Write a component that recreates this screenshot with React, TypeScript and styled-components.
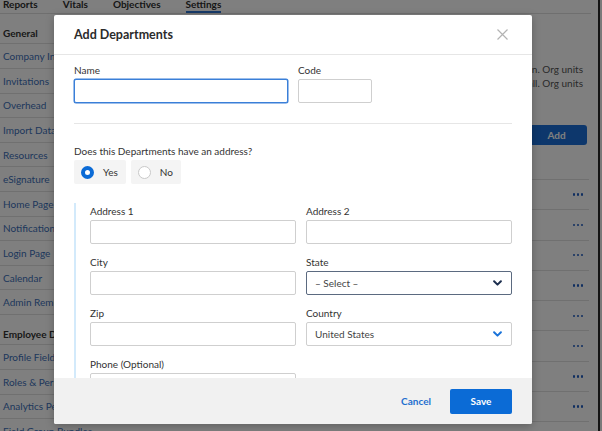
import styled, { createGlobalStyle } from "styled-components";

const GlobalStyle = createGlobalStyle`
  html, body {
    margin: 0;
    padding: 0;
  }
  body {
    font-family: Lato, "Open Sans", sans-serif;
    background: #7a7a7a;
  }
  * {
    box-sizing: border-box;
  }
`;

const Frame = styled.div`
  position: relative;
  width: 602px;
  height: 431px;
  overflow: hidden;
  background: #7a7a7a;
`;

const Page = styled.div`
  position: relative;
  width: 600px;
  height: 431px;
  background: #fff;
  border-right: 2px solid #141414;
  overflow: hidden;
`;

/* ---------- page behind the dialog ---------- */

const TabBar = styled.nav`
  display: flex;
  gap: 25px;
  height: 14px;
  padding-left: 3px;
  margin-right: 7px;
  border-bottom: 1px solid #dedede;
`;

const Tab = styled.span<{ $active?: boolean }>`
  margin-top: -1px;
  height: 14px;
  font-size: 10px;
  font-weight: 700;
  line-height: 10px;
  color: #2e2e2e;
  border-bottom: 2px solid ${(p) => (p.$active ? "#2f76d2" : "transparent")};
`;

const Layout = styled.div`
  display: grid;
  grid-template-columns: 150px 1fr;
`;

const Sidebar = styled.aside`
  display: flex;
  flex-direction: column;
`;

const SideTitle = styled.div`
  height: 30.4px;
  padding: 12px 0 0 3px;
  font-size: 10px;
  font-weight: 700;
  line-height: 14px;
  color: #333;
  white-space: nowrap;
  border-bottom: 1px solid #e0e0e0;
`;

const SideItem = styled.div`
  display: flex;
  align-items: center;
  height: 24.6px;
  padding-left: 3px;
  font-size: 10px;
  color: #3c6fb8;
  white-space: nowrap;
  border-bottom: 1px solid #e0e0e0;
`;

const Main = styled.main`
  display: flex;
  flex-direction: column;
  padding: 48px 9px 0 20px;
`;

const DescLine = styled.div`
  font-size: 10px;
  line-height: 14px;
  color: #555;
  text-align: right;
  white-space: nowrap;
  padding-right: 6px;
`;

const Toolbar = styled.div`
  display: flex;
  justify-content: flex-end;
  margin-top: 35px;
`;

const AddButton = styled.button`
  width: 61px;
  height: 20px;
  margin-right: 2px;
  border: none;
  border-radius: 3px;
  background: #1b6fd8;
  color: #fff;
  font-family: inherit;
  font-size: 10px;
  font-weight: 700;
`;

const Table = styled.div`
  margin-top: 5px;
  display: flex;
  flex-direction: column;
`;

const TableRow = styled.div<{ $head?: boolean }>`
  display: flex;
  align-items: center;
  justify-content: flex-end;
  height: ${(p) => (p.$head ? "30px" : "30.3px")};
  padding-right: 6px;
  border-bottom: 1px solid #e0e0e0;
`;

const Dots = styled.span`
  display: flex;
  gap: 1.5px;
  & > i {
    width: 2.5px;
    height: 2.5px;
    border-radius: 50%;
    background: #1f5cc0;
  }
`;

/* ---------- dialog ---------- */

const Overlay = styled.div`
  position: absolute;
  inset: 0;
  padding: 15px 0 0 54px;
  background: rgba(0, 0, 0, 0.5);
`;

const Modal = styled.div`
  display: flex;
  flex-direction: column;
  width: 478px;
  height: 409px;
  background: #fff;
  border-radius: 2px;
  overflow: hidden;
  box-shadow: 0 2px 8px rgba(0, 0, 0, 0.25);
`;

const ModalHeader = styled.div`
  display: flex;
  align-items: center;
  justify-content: space-between;
  height: 40px;
  flex: none;
  padding: 0 20px;
  border-bottom: 1px solid #e6e6e6;
`;

const ModalTitle = styled.h2`
  margin: 0;
  font-size: 12.5px;
  font-weight: 700;
  color: #2b2b2b;
`;

const CloseButton = styled.button`
  display: flex;
  padding: 0;
  margin-right: 4px;
  border: none;
  background: none;
  color: #b3b3b3;
`;

const ModalBody = styled.div`
  flex: 1;
  overflow: hidden;
  padding: 7px 20px 0;
`;

const Row = styled.div`
  display: flex;
  gap: 10px;
`;

const Field = styled.div<{ $width?: number }>`
  display: flex;
  flex-direction: column;
  width: ${(p) => (p.$width ? `${p.$width}px` : "auto")};
`;

const Label = styled.label`
  margin-bottom: 1px;
  font-size: 10px;
  line-height: 16px;
  color: #333;
`;

const Input = styled.div<{ $focus?: boolean }>`
  height: 24px;
  border: 1px solid ${(p) => (p.$focus ? "#3a7fd8" : "#cfcfcf")};
  border-radius: 2px;
  background: #fff;
  box-shadow: ${(p) => (p.$focus ? "0 0 0 0.5px #3a7fd8" : "none")};
`;

const Select = styled.div<{ $active?: boolean }>`
  display: flex;
  align-items: center;
  justify-content: space-between;
  height: 24px;
  padding: 0 9px 0 8px;
  border: 1px solid ${(p) => (p.$active ? "#5b6a80" : "#cfcfcf")};
  border-radius: 2px;
  font-size: 10px;
  color: #444;
`;

const Divider = styled.hr`
  margin: 20px 0 0;
  border: none;
  border-top: 1px solid #e6e6e6;
`;

const Question = styled.div`
  margin: 19px 0 1px;
  font-size: 10px;
  line-height: 16px;
  color: #333;
`;

const RadioGroup = styled.div`
  display: flex;
  gap: 5px;
`;

const RadioOption = styled.div`
  display: flex;
  align-items: center;
  gap: 9px;
  height: 24px;
  padding: 0 8px 0 7px;
  background: #f4f4f4;
  border-radius: 2px;
  font-size: 10px;
  color: #333;
`;

const RadioDot = styled.span<{ $checked?: boolean }>`
  width: 13px;
  height: 13px;
  border-radius: 50%;
  background: #fff;
  border: ${(p) => (p.$checked ? "4px solid #0b6bd6" : "1px solid #c9c9c9")};
`;

const AddressSection = styled.div`
  display: grid;
  grid-template-columns: 1fr 1fr;
  column-gap: 10px;
  row-gap: 10px;
  margin-top: 19px;
  padding: 0 0 10px 14px;
  border-left: 2px solid #d3eafb;
`;

const ModalFooter = styled.div`
  display: flex;
  align-items: center;
  justify-content: flex-end;
  gap: 19px;
  height: 46px;
  flex: none;
  padding: 0 20px;
  background: #f1f1f1;
`;

const CancelButton = styled.button`
  padding: 0;
  border: none;
  background: none;
  font-family: inherit;
  font-size: 10px;
  font-weight: 700;
  color: #1f6fcf;
`;

const SaveButton = styled.button`
  width: 62px;
  height: 25px;
  border: none;
  border-radius: 2px;
  background: #0b6bd6;
  color: #fff;
  font-family: inherit;
  font-size: 10px;
  font-weight: 700;
`;

const Chevron = ({ color }: { color: string }) => (
  <svg width="9" height="6" viewBox="0 0 9 6">
    <path d="M1.1 1.2 L4.5 4.6 L7.9 1.2" fill="none" stroke={color} strokeWidth="2" strokeLinecap="round" strokeLinejoin="round" />
  </svg>
);

const CloseIcon = () => (
  <svg width="11" height="11" viewBox="0 0 11 11">
    <path d="M0.5 0.5 L10.5 10.5 M10.5 0.5 L0.5 10.5" stroke="currentColor" strokeWidth="1.2" />
  </svg>
);

const sideGeneral = [
  "Company Info",
  "Invitations",
  "Overhead",
  "Import Data",
  "Resources",
  "eSignature",
  "Home Page",
  "Notifications",
  "Login Page",
  "Calendar",
  "Admin Reminders",
];

const sideEmployee = ["Profile Fields", "Roles & Permissions", "Analytics Permissions", "Field Group Bundles"];

export default function App() {
  return (
    <Frame>
      <GlobalStyle />
      <Page>
        <TabBar>
          <Tab>Reports</Tab>
          <Tab>Vitals</Tab>
          <Tab>Objectives</Tab>
          <Tab $active>Settings</Tab>
        </TabBar>
        <Layout>
          <Sidebar>
            <SideTitle>General</SideTitle>
            {sideGeneral.map((s) => (
              <SideItem key={s}>{s}</SideItem>
            ))}
            <SideTitle>Employee Data</SideTitle>
            {sideEmployee.map((s) => (
              <SideItem key={s}>{s}</SideItem>
            ))}
          </Sidebar>
          <Main>
            <DescLine>Group people by organization. Org units</DescLine>
            <DescLine>Visible to all. Org units</DescLine>
            <Toolbar>
              <AddButton>Add</AddButton>
            </Toolbar>
            <Table>
              <TableRow $head />
              {Array.from({ length: 9 }).map((_, i) => (
                <TableRow key={i}>
                  <Dots>
                    <i />
                    <i />
                    <i />
                  </Dots>
                </TableRow>
              ))}
            </Table>
          </Main>
        </Layout>

        <Overlay>
          <Modal>
            <ModalHeader>
              <ModalTitle>Add Departments</ModalTitle>
              <CloseButton>
                <CloseIcon />
              </CloseButton>
            </ModalHeader>
            <ModalBody>
              <Row>
                <Field $width={214}>
                  <Label>Name</Label>
                  <Input $focus />
                </Field>
                <Field $width={74}>
                  <Label>Code</Label>
                  <Input />
                </Field>
              </Row>
              <Divider />
              <Question>Does this Departments have an address?</Question>
              <RadioGroup>
                <RadioOption>
                  <RadioDot $checked />
                  Yes
                </RadioOption>
                <RadioOption>
                  <RadioDot />
                  No
                </RadioOption>
              </RadioGroup>
              <AddressSection>
                <Field>
                  <Label>Address 1</Label>
                  <Input />
                </Field>
                <Field>
                  <Label>Address 2</Label>
                  <Input />
                </Field>
                <Field>
                  <Label>City</Label>
                  <Input />
                </Field>
                <Field>
                  <Label>State</Label>
                  <Select $active>
                    – Select –
                    <Chevron color="#1d2f4f" />
                  </Select>
                </Field>
                <Field>
                  <Label>Zip</Label>
                  <Input />
                </Field>
                <Field>
                  <Label>Country</Label>
                  <Select>
                    United States
                    <Chevron color="#1a73d9" />
                  </Select>
                </Field>
                <Field>
                  <Label>Phone (Optional)</Label>
                  <Input />
                </Field>
              </AddressSection>
            </ModalBody>
            <ModalFooter>
              <CancelButton>Cancel</CancelButton>
              <SaveButton>Save</SaveButton>
            </ModalFooter>
          </Modal>
        </Overlay>
      </Page>
    </Frame>
  );
}
